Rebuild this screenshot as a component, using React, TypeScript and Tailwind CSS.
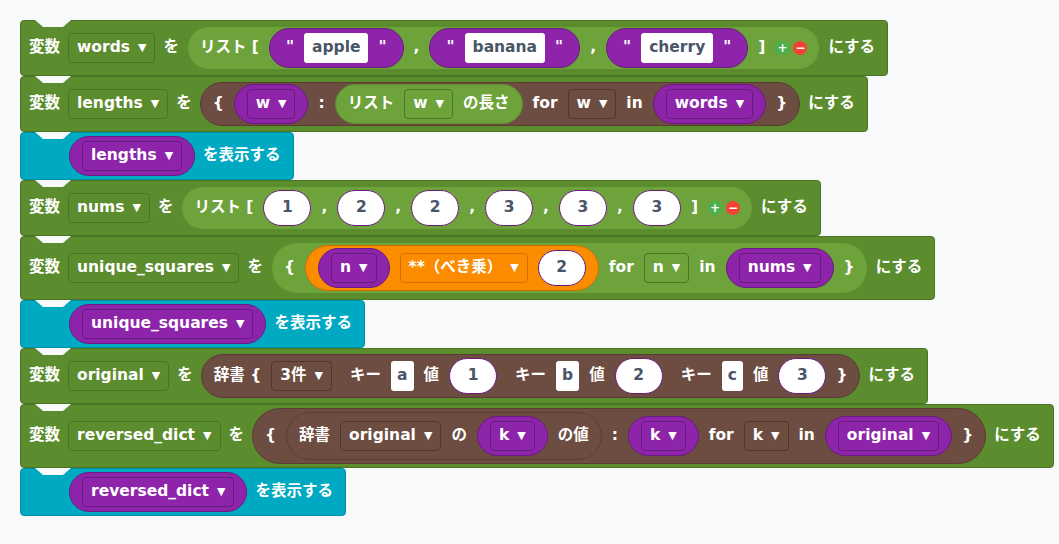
import type { ReactNode } from "react";

const F = { fontFamily: '"DejaVu Sans", "Noto Sans CJK JP", sans-serif' };

function Block({ bg, border, h, children }: { bg: string; border: string; h: string; children: ReactNode }) {
  return (
    <div className={`relative flex w-fit items-center gap-2 rounded-[4px] border px-2 ${bg} ${border} ${h}`}>
      {/* notch */}
      <svg className="absolute -top-px left-[14px]" width="36" height="8" viewBox="0 0 36 8">
        <path d="M0 0 L8 7 L28 7 L36 0 Z" fill="#f8f9fb" />
      </svg>
      {children}
    </div>
  );
}

function Green({ h = "h-[56px]", children }: { h?: string; children: ReactNode }) {
  return (
    <Block bg="bg-[#5b8c2d]" border="border-[#4a7525]" h={h}>
      {children}
    </Block>
  );
}

function Print({ children }: { children: ReactNode }) {
  return (
    <Block bg="bg-[#00a9c2]" border="border-[#0090a6]" h="h-[48px]">
      <div className="w-8" />
      {children}
      <span className="pr-1">を表示する</span>
    </Block>
  );
}

function Drop({ children, dark = "border-[#4a7525]", bg = "" }: { children: ReactNode; dark?: string; bg?: string }) {
  return (
    <div className={`flex h-[30px] items-center gap-2 rounded-[4px] border px-2 ${dark} ${bg}`}>
      <span>{children}</span>
      <span className="text-[11px]">▼</span>
    </div>
  );
}

function Pill({ cls, children, h = "h-[44px]" }: { cls: string; children: ReactNode; h?: string }) {
  return <div className={`flex items-center gap-[10px] rounded-full border px-3 ${h} ${cls}`}>{children}</div>;
}

function Var({ name }: { name: string }) {
  return (
    <Pill cls="bg-[#8e24aa] border-[#6a1b80]" h="h-[40px]">
      <Drop dark="border-[#6a1b80]">{name}</Drop>
    </Pill>
  );
}

function Str({ v }: { v: string }) {
  return (
    <Pill cls="bg-[#8e24aa] border-[#6a1b80] px-4" h="h-[40px]">
      <span>"</span>
      <span className="rounded-[3px] bg-white px-2 py-[3px] text-[#4a5568]">{v}</span>
      <span>"</span>
    </Pill>
  );
}

function Num({ v }: { v: string }) {
  return (
    <div className="flex h-[36px] w-[48px] items-center justify-center rounded-full border border-[#6a1b80] bg-white text-[#4a5568]">
      {v}
    </div>
  );
}

function Key({ v }: { v: string }) {
  return <span className="rounded-[3px] bg-white px-[6px] py-[3px] text-[#4a5568]">{v}</span>;
}

function PlusMinus() {
  return (
    <span className="flex items-center gap-1">
      <span className="flex h-[14px] w-[14px] items-center justify-center rounded-full bg-[#4caf50] text-[12px] leading-none">+</span>
      <span className="flex h-[14px] w-[14px] items-center justify-center rounded-full bg-[#f44336] text-[12px] leading-none">−</span>
    </span>
  );
}

const LIST = "bg-[#6da33a] border-[#5b8c2d]";
const BROWN = "bg-[#6d4c41] border-[#5a3d33]";

export default function App() {
  return (
    <div className="min-h-[544px] bg-[#f8f9fb] pl-[20px] pt-[20px] text-[15.5px] font-bold text-white" style={F}>
      <Green>
        <span>変数</span>
        <Drop>words</Drop>
        <span>を</span>
        <Pill cls={LIST}>
          <span>リスト [</span>
          <Str v="apple" />
          <span>,</span>
          <Str v="banana" />
          <span>,</span>
          <Str v="cherry" />
          <span>]</span>
          <PlusMinus />
        </Pill>
        <span className="pr-1">にする</span>
      </Green>
      <Green>
        <span>変数</span>
        <Drop>lengths</Drop>
        <span>を</span>
        <Pill cls={BROWN}>
          <span>{"{"}</span>
          <Var name="w" />
          <span>:</span>
          <Pill cls={LIST} h="h-[40px]">
            <span>リスト</span>
            <Drop>w</Drop>
            <span>の長さ</span>
          </Pill>
          <span>for</span>
          <Drop dark="border-[#4e352d]">w</Drop>
          <span>in</span>
          <Var name="words" />
          <span>{"}"}</span>
        </Pill>
        <span className="pr-1">にする</span>
      </Green>
      <Print>
        <Var name="lengths" />
      </Print>
      <Green>
        <span>変数</span>
        <Drop>nums</Drop>
        <span>を</span>
        <Pill cls={LIST}>
          <span>リスト [</span>
          <Num v="1" />
          <span>,</span>
          <Num v="2" />
          <span>,</span>
          <Num v="2" />
          <span>,</span>
          <Num v="3" />
          <span>,</span>
          <Num v="3" />
          <span>,</span>
          <Num v="3" />
          <span>]</span>
          <PlusMinus />
        </Pill>
        <span className="pr-1">にする</span>
      </Green>
      <Green h="h-[64px]">
        <span>変数</span>
        <Drop>unique_squares</Drop>
        <span>を</span>
        <Pill cls={LIST} h="h-[52px]">
          <span>{"{"}</span>
          <Pill cls="bg-[#fb8c00] border-[#d06f00] px-1" h="h-[46px]">
            <Var name="n" />
            <Drop dark="border-[#d06f00]">**（べき乗）</Drop>
            <Num v="2" />
          </Pill>
          <span>for</span>
          <Drop>n</Drop>
          <span>in</span>
          <Var name="nums" />
          <span>{"}"}</span>
        </Pill>
        <span className="pr-1">にする</span>
      </Green>
      <Print>
        <Var name="unique_squares" />
      </Print>
      <Green>
        <span>変数</span>
        <Drop>original</Drop>
        <span>を</span>
        <Pill cls={BROWN}>
          <span>辞書 {"{"}</span>
          <Drop dark="border-[#4e352d]">3件</Drop>
          <span className="pl-2">キー</span>
          <Key v="a" />
          <span>値</span>
          <Num v="1" />
          <span className="pl-2">キー</span>
          <Key v="b" />
          <span>値</span>
          <Num v="2" />
          <span className="pl-2">キー</span>
          <Key v="c" />
          <span>値</span>
          <Num v="3" />
          <span>{"}"}</span>
        </Pill>
        <span className="pr-1">にする</span>
      </Green>
      <Green h="h-[64px]">
        <span>変数</span>
        <Drop>reversed_dict</Drop>
        <span>を</span>
        <Pill cls={BROWN} h="h-[56px]">
          <span>{"{"}</span>
          <Pill cls={BROWN} h="h-[48px]">
            <span>辞書</span>
            <Drop dark="border-[#4e352d]">original</Drop>
            <span>の</span>
            <Var name="k" />
            <span>の値</span>
          </Pill>
          <span>:</span>
          <Var name="k" />
          <span>for</span>
          <Drop dark="border-[#4e352d]">k</Drop>
          <span>in</span>
          <Var name="original" />
          <span>{"}"}</span>
        </Pill>
        <span className="pr-1">にする</span>
      </Green>
      <Print>
        <Var name="reversed_dict" />
      </Print>
    </div>
  );
}
